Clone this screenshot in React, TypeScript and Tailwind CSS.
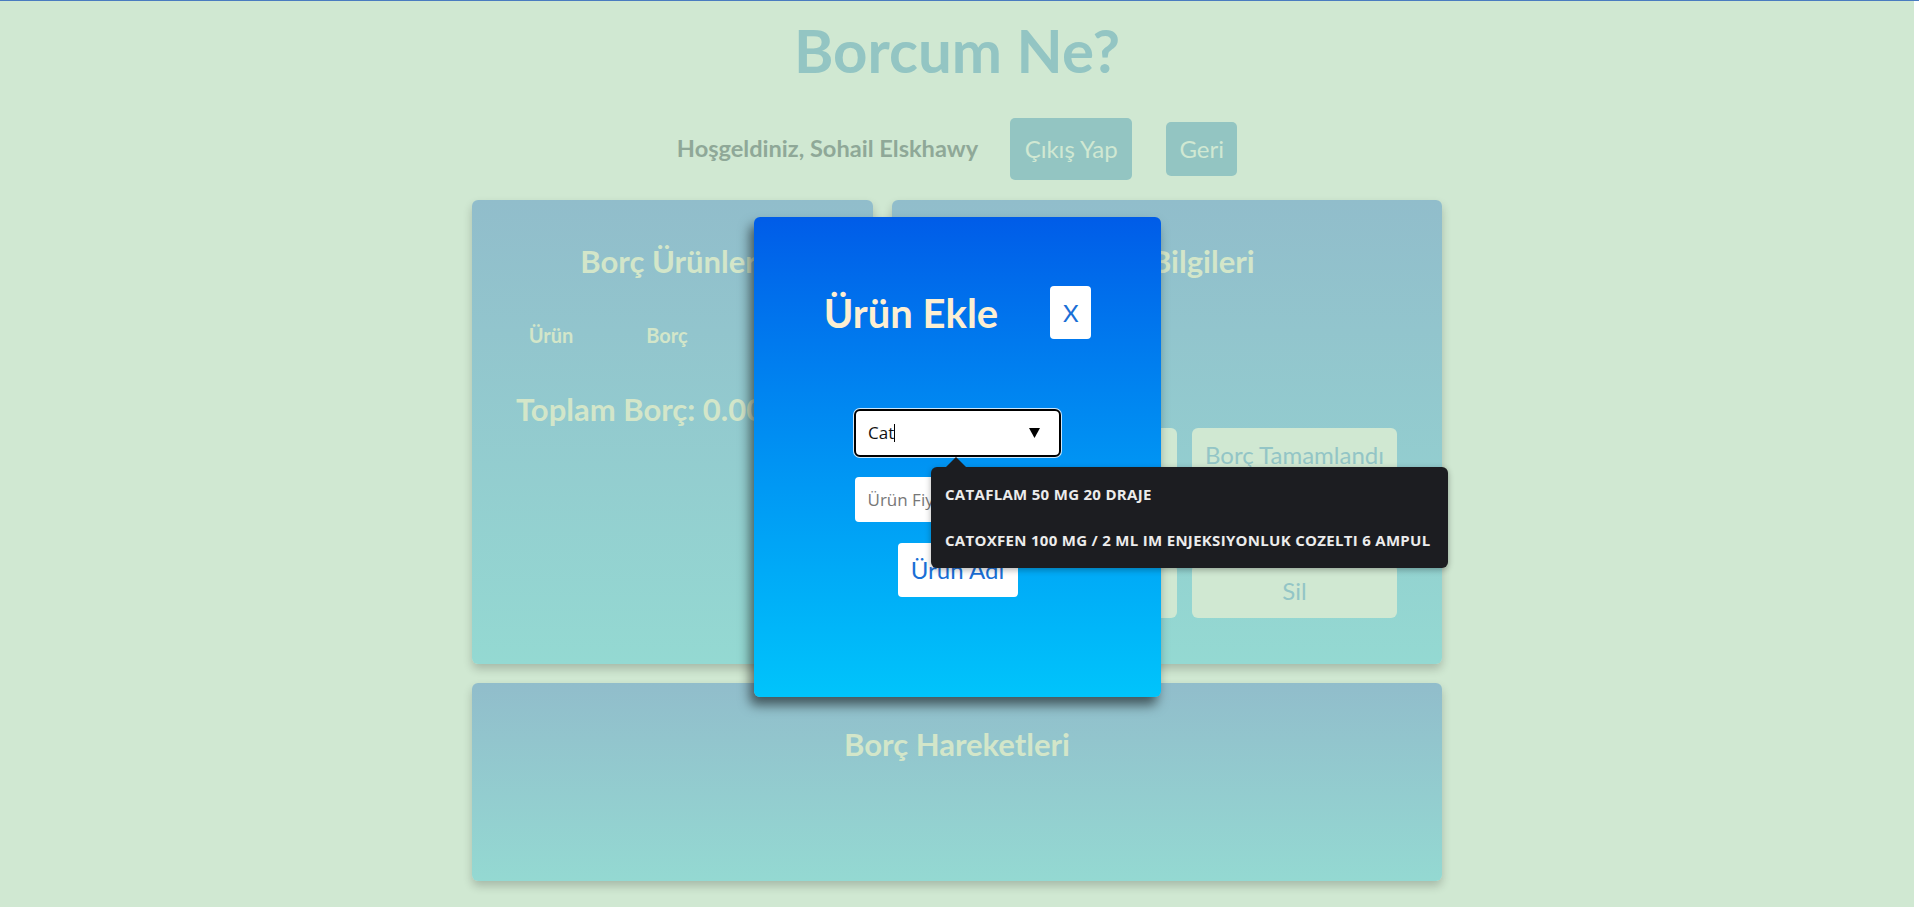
import React from "react";

const lato = { fontFamily: "Lato, 'Noto Sans', sans-serif" };

const App = () => {
  const rows = [
    ["", "Borç Tamamlandı"],
    ["", ""],
    ["", "Sil"],
  ];

  return (
    <div className="min-h-screen bg-white border-t border-[#4a7cc0] flex" style={lato}>
      <main className="relative w-[1914px] h-[906px] bg-[#d0e8d2] flex flex-col items-center">
        {/* Header */}
        <h1 className="mt-[19px] text-[60px] leading-[60px] font-bold text-[#93c5c3]">Borcum Ne?</h1>

        <div className="mt-[38px] flex items-center h-[62px]">
          <span className="text-[23.6px] font-bold text-[#8fa898]">Hoşgeldiniz, Sohail Elskhawy</span>
          <button className="ml-[32px] w-[122px] h-[62px] rounded-[5px] bg-[#93c5c2] text-[24px] text-[#d0e8d2]">
            Çıkış Yap
          </button>
          <button className="ml-[34px] w-[71px] h-[54px] rounded-[5px] bg-[#93c5c2] text-[24px] text-[#d0e8d2]">
            Geri
          </button>
        </div>

        {/* Cards */}
        <div className="mt-[20px] flex gap-[19px]">
          <section className="w-[401px] h-[464px] rounded-[6px] bg-gradient-to-b from-[#91bdcb] to-[#94d9d2] shadow-[0_5px_10px_rgba(0,0,0,0.2)] pt-[45px] text-[#d3e6c9]">
            <h2 className="text-center text-[31px] leading-[32px] font-bold">Borç Ürünleri</h2>
            <div className="mt-[48px] ml-[21px] flex text-[20px] leading-[20px] font-bold">
              <span className="w-[116px] text-center">Ürün</span>
              <span className="w-[116px] text-center">Borç</span>
            </div>
            <p className="mt-[48px] ml-[44px] text-[31px] leading-[32px] font-bold whitespace-nowrap">Toplam Borç: 0.00</p>
          </section>

          <section className="w-[550px] h-[464px] rounded-[6px] bg-gradient-to-b from-[#91bdcb] to-[#94d9d2] shadow-[0_5px_10px_rgba(0,0,0,0.2)] pt-[45px] text-[#d3e6c9]">
            <h2 className="text-center text-[31px] leading-[32px] font-bold">Borç Bilgileri</h2>
            <div className="mt-[151px] ml-[80px] grid grid-cols-[205px_205px] gap-x-[15px] gap-y-[14px]">
              {rows.flat().map((label, i) => (
                <button
                  key={i}
                  className="h-[54px] rounded-[6px] bg-[#d0e8d2] text-[24px] text-[#93c5c6]"
                >
                  {label}
                </button>
              ))}
            </div>
          </section>
        </div>

        <section className="mt-[19px] w-[970px] h-[198px] rounded-[6px] bg-gradient-to-b from-[#91bdcb] to-[#94d9d2] shadow-[0_5px_10px_rgba(0,0,0,0.2)] pt-[45px] text-[#d3e6c9]">
          <h2 className="text-center text-[31px] leading-[32px] font-bold">Borç Hareketleri</h2>
        </section>

        {/* Modal */}
        <div className="absolute left-[754px] top-[216px] w-[407px] h-[480px] rounded-[6px] bg-gradient-to-b from-[#005ce8] to-[#00c4fb] shadow-[-4px_8px_12px_rgba(0,0,0,0.55)] pt-[69px] flex flex-col items-center">
          <div className="flex items-center gap-[52px] h-[53px]">
            <h3 className="text-[40px] leading-[40px] font-bold text-[#fcefd2]">Ürün Ekle</h3>
            <button className="w-[41px] h-[53px] rounded-[4px] bg-white text-[24px] text-[#1a6fd6]">X</button>
          </div>

          <div className="mt-[70px] w-[207px] h-[48px] rounded-[6px] border-2 border-black bg-white ring-1 ring-white/80 flex items-center pl-[12px] pr-[19px]" style={{ fontFamily: "'Open Sans', 'Noto Sans', sans-serif" }}>
            <span className="text-[17px] text-[#111]">Cat</span>
            <span className="w-px h-[18px] bg-black" />
            <svg className="ml-auto" width="11" height="10" viewBox="0 0 11 10">
              <path d="M0 0 H11 L5.5 10 Z" fill="#000" />
            </svg>
          </div>

          <div className="mt-[20px] w-[206px] h-[45px] rounded-[4px] bg-white flex items-center pl-[13px]" style={{ fontFamily: "'Open Sans', 'Noto Sans', sans-serif" }}>
            <span className="text-[17px] text-[#777]">Ürün Fiyatı</span>
          </div>

          <button className="mt-[21px] w-[120px] h-[54px] rounded-[4px] bg-white text-[24px] text-[#1a6fd6]">Ürün Adı</button>
        </div>

        {/* Datalist dropdown */}
        <div className="absolute left-[931px] top-[466px] w-[517px] h-[101px] rounded-[6px] bg-[#1c1d21] shadow-[0_2px_6px_rgba(0,0,0,0.3)] pt-[16px] pl-[14px]" style={{ fontFamily: "'Open Sans', 'Noto Sans', sans-serif" }}>
          <svg className="absolute left-[15px] -top-[10px]" width="20" height="10" viewBox="0 0 20 10">
            <path d="M0 10 L10 0 L20 10 Z" fill="#1c1d21" />
          </svg>
          <ul className="flex flex-col gap-[24px] text-[15px] leading-[22px] tracking-[0.3px] font-bold text-[#ececec]">
            <li>CATAFLAM 50 MG 20 DRAJE</li>
            <li>CATOXFEN 100 MG / 2 ML IM ENJEKSIYONLUK COZELTI 6 AMPUL</li>
          </ul>
        </div>
      </main>
    </div>
  );
};

export default App;
